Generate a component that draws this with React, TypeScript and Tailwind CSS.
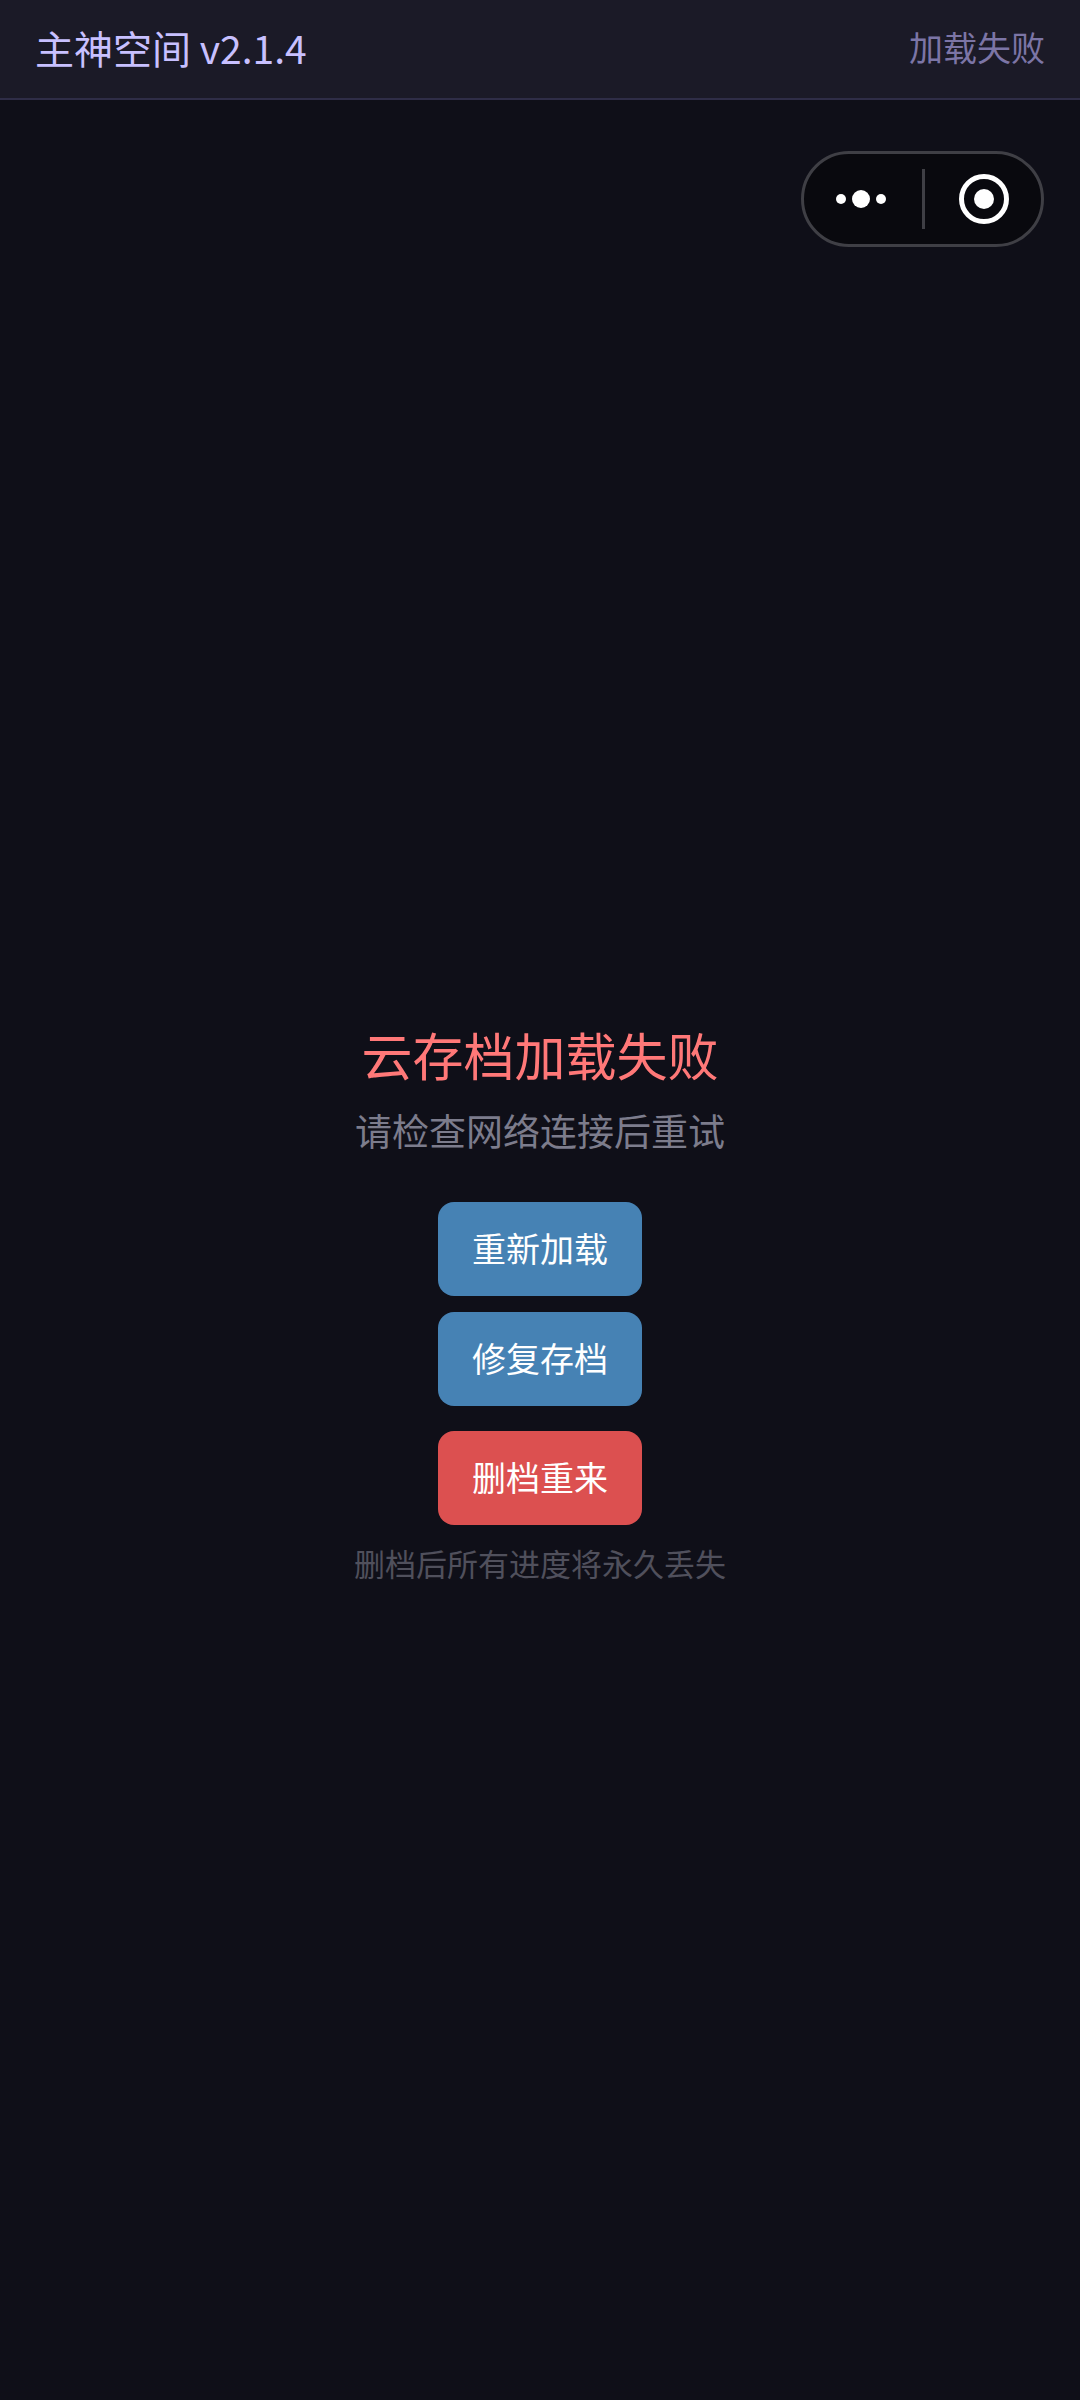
const actions = [
  { label: "重新加载", className: "bg-[#4682b4]" },
  { label: "修复存档", className: "mt-4 bg-[#4682b4]" },
  { label: "删档重来", className: "mt-[25px] bg-[#dc5050]" },
];

function Header() {
  return (
    <header className="flex h-[100px] items-center justify-between border-b-2 border-[#2f2d47] bg-[#1b1a27] px-[35px] pb-1">
      <h1 className="text-[39px] leading-none text-[#c8c0ff]">
        主神空间 v2.1.4
      </h1>
      <span className="text-[34px] leading-none text-[#7c75a6]">加载失败</span>
    </header>
  );
}

function Capsule() {
  return (
    <div className="mt-[51px] mr-9 flex h-24 w-[243px] items-center self-end rounded-full border-3 border-[#3f3f45] bg-[#09090e]">
      <button
        type="button"
        aria-label="更多"
        className="flex flex-1 items-center justify-center pr-1"
      >
        <svg width="50" height="18" viewBox="0 0 50 18" fill="#fff">
          <circle cx="5" cy="9" r="5" />
          <circle cx="25" cy="9" r="9" />
          <circle cx="45" cy="9" r="5" />
        </svg>
      </button>
      <div className="h-15 w-[3px] bg-[#3f3f45]" />
      <button
        type="button"
        aria-label="关闭"
        className="flex flex-1 items-center justify-center pl-0.5"
      >
        <svg width="50" height="50" viewBox="0 0 50 50">
          <circle
            cx="25"
            cy="25"
            r="22.5"
            fill="none"
            stroke="#fff"
            strokeWidth="5"
          />
          <circle cx="25" cy="25" r="10" fill="#fff" />
        </svg>
      </button>
    </div>
  );
}

export default function App() {
  return (
    <div className="flex min-h-screen flex-col bg-[#0f0f18] font-['Noto_Sans_CJK_SC',sans-serif]">
      <Header />
      <Capsule />
      <main className="flex flex-1 flex-col items-center justify-center pb-9">
        <h2 className="text-[51px] leading-[56px] text-[#ff7878]">
          云存档加载失败
        </h2>
        <p className="mt-6 text-[37px] leading-[48px] text-[#7c7c8c]">
          请检查网络连接后重试
        </p>
        <div className="mt-[48px] flex flex-col">
          {actions.map((action) => (
            <button
              key={action.label}
              type="button"
              className={`h-[94px] rounded-2xl px-[34px] pb-0.5 text-[34px] leading-none text-white ${action.className}`}
            >
              {action.label}
            </button>
          ))}
        </div>
        <p className="mt-4 text-[31px] leading-[44px] text-[#50505c]">
          删档后所有进度将永久丢失
        </p>
      </main>
    </div>
  );
}
